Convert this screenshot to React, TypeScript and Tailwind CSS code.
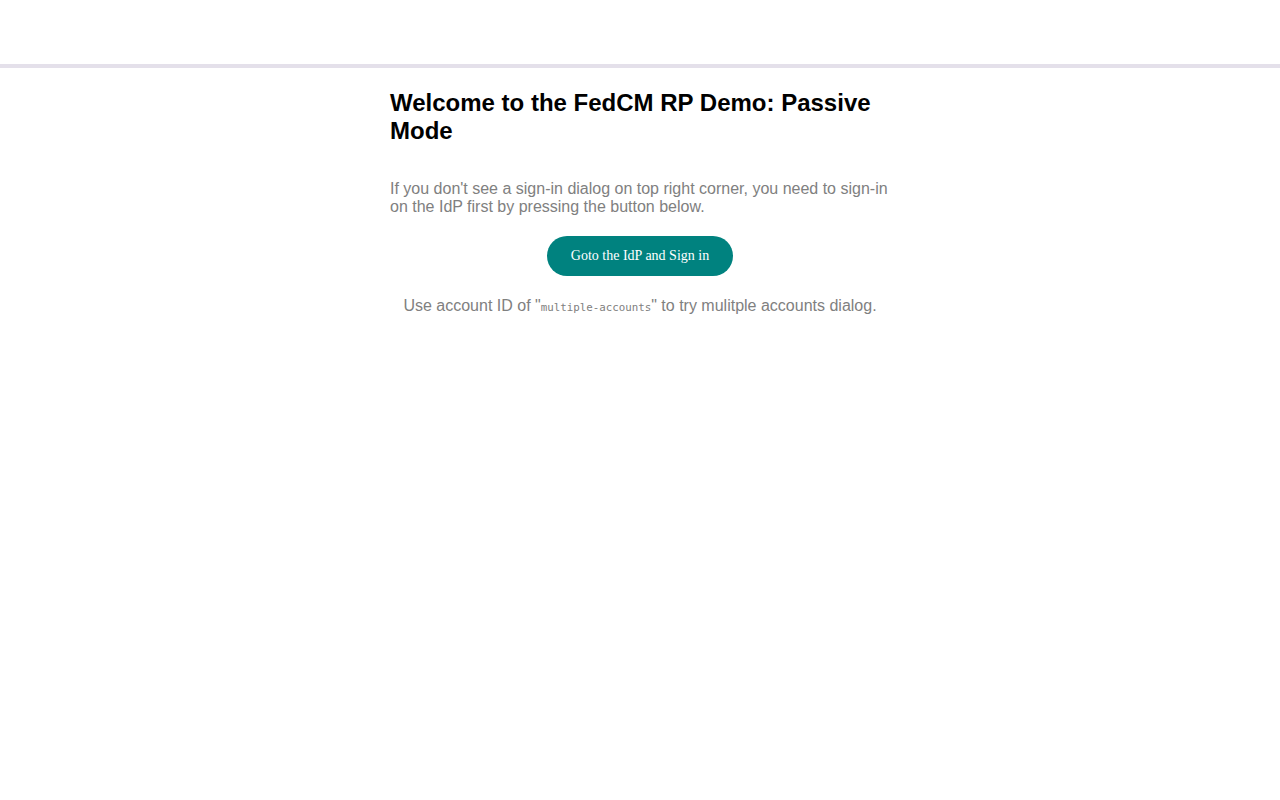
export default function App() {
  return (
    <div className="min-h-screen bg-white font-['Liberation_Sans',Arial,sans-serif]">
      {/* Top bar */}
      <header className="h-[68px] border-b-4 border-[#e4e0ea] bg-white" />

      <main className="mx-auto w-[500px] pt-[21px]">
        <h1 className="text-2xl leading-7 font-bold text-black">
          Welcome to the FedCM RP Demo: Passive Mode
        </h1>

        <p className="mt-[35px] text-base leading-[18px] text-[#808080]">
          If you don't see a sign-in dialog on top right corner, you need to
          sign-in on the IdP first by pressing the button below.
        </p>

        <div className="mt-5 flex justify-center">
          <button className="h-10 rounded-full bg-[#00827f] px-6 font-['Liberation_Serif',serif] text-sm text-white">
            Goto the IdP and Sign in
          </button>
        </div>

        <p className="mt-[21px] text-center text-base leading-[18px] text-[#808080]">
          Use account ID of "
          <code className="font-['DejaVu_Sans_Mono',monospace] text-[10.8px]">
            multiple-accounts
          </code>
          " to try mulitple accounts dialog.
        </p>
      </main>
    </div>
  );
}
